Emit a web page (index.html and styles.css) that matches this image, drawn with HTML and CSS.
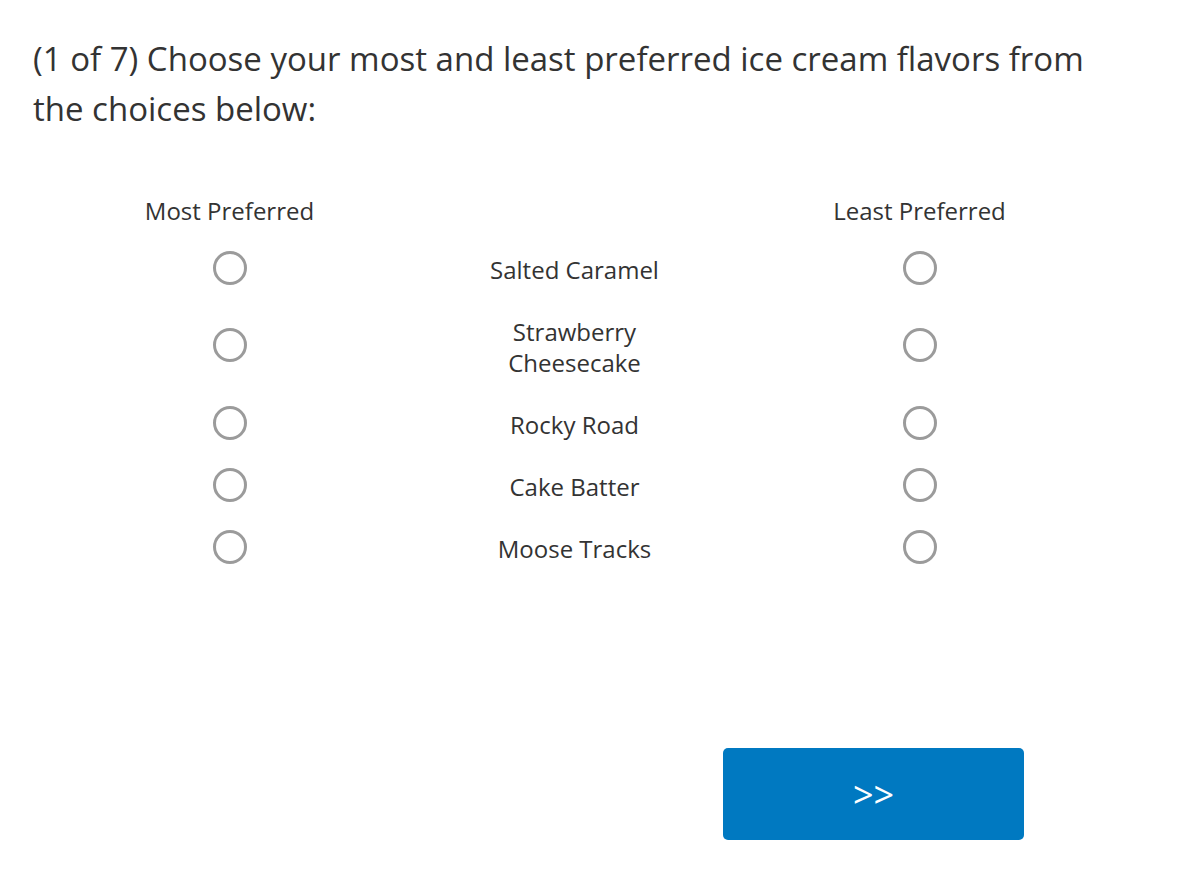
FILE: index.html
```html
<!DOCTYPE html>
<html>
<head>
<meta charset="utf-8">
<link rel="stylesheet" href="styles.css">
</head>
<body>
<div class="page">
  <h1 class="question">(1 of 7) Choose your most and least preferred ice cream flavors from the choices below:</h1>
  <div class="maxdiff">
    <div class="row head">
      <div class="cell">Most Preferred</div>
      <div class="cell"></div>
      <div class="cell">Least Preferred</div>
    </div>
    <div class="row">
      <div class="cell"><span class="radio"></span></div>
      <div class="cell label">Salted Caramel</div>
      <div class="cell"><span class="radio"></span></div>
    </div>
    <div class="row">
      <div class="cell"><span class="radio"></span></div>
      <div class="cell label">Strawberry<br>Cheesecake</div>
      <div class="cell"><span class="radio"></span></div>
    </div>
    <div class="row">
      <div class="cell"><span class="radio"></span></div>
      <div class="cell label">Rocky Road</div>
      <div class="cell"><span class="radio"></span></div>
    </div>
    <div class="row">
      <div class="cell"><span class="radio"></span></div>
      <div class="cell label">Cake Batter</div>
      <div class="cell"><span class="radio"></span></div>
    </div>
    <div class="row">
      <div class="cell"><span class="radio"></span></div>
      <div class="cell label">Moose Tracks</div>
      <div class="cell"><span class="radio"></span></div>
    </div>
  </div>
  <div class="nav">
    <button class="next">&gt;&gt;</button>
  </div>
</div>
</body>
</html>
```

FILE: styles.css
```css
html, body {
  margin: 0;
  padding: 0;
  background: #ffffff;
}
body {
  font-family: "Open Sans", "Liberation Sans", sans-serif;
  color: #333333;
}
.page {
  padding: 34px 0 0 33px;
  width: 1090px;
}
.question {
  margin: 0;
  font-size: 33px;
  font-weight: 400;
  line-height: 50px;
  color: #333333;
}
.maxdiff {
  margin: 61px 0 0 24px;
  width: 1035px;
}
.row {
  display: grid;
  grid-template-columns: 345px 345px 345px;
  align-items: center;
  padding: 14px 0;
}
.row.head {
  padding: 0 0 10.5px 0;
}
.cell {
  text-align: center;
  font-size: 24px;
  line-height: 31px;
  display: flex;
  justify-content: center;
  align-items: center;
}
.label {
  padding-top: 3px;
}
.radio {
  display: block;
  width: 28px;
  height: 28px;
  border: 3px solid #9b9b9b;
  border-radius: 50%;
  box-sizing: content-box;
}
.nav {
  margin: 170px 0 0 690px;
}
.next {
  width: 301px;
  height: 92px;
  border: none;
  border-radius: 5px;
  background: #0079c1;
  color: #ffffff;
  font-family: "Open Sans", "Liberation Sans", sans-serif;
  font-size: 36px;
  cursor: pointer;
  padding: 2px 0 0 0;
}
```
